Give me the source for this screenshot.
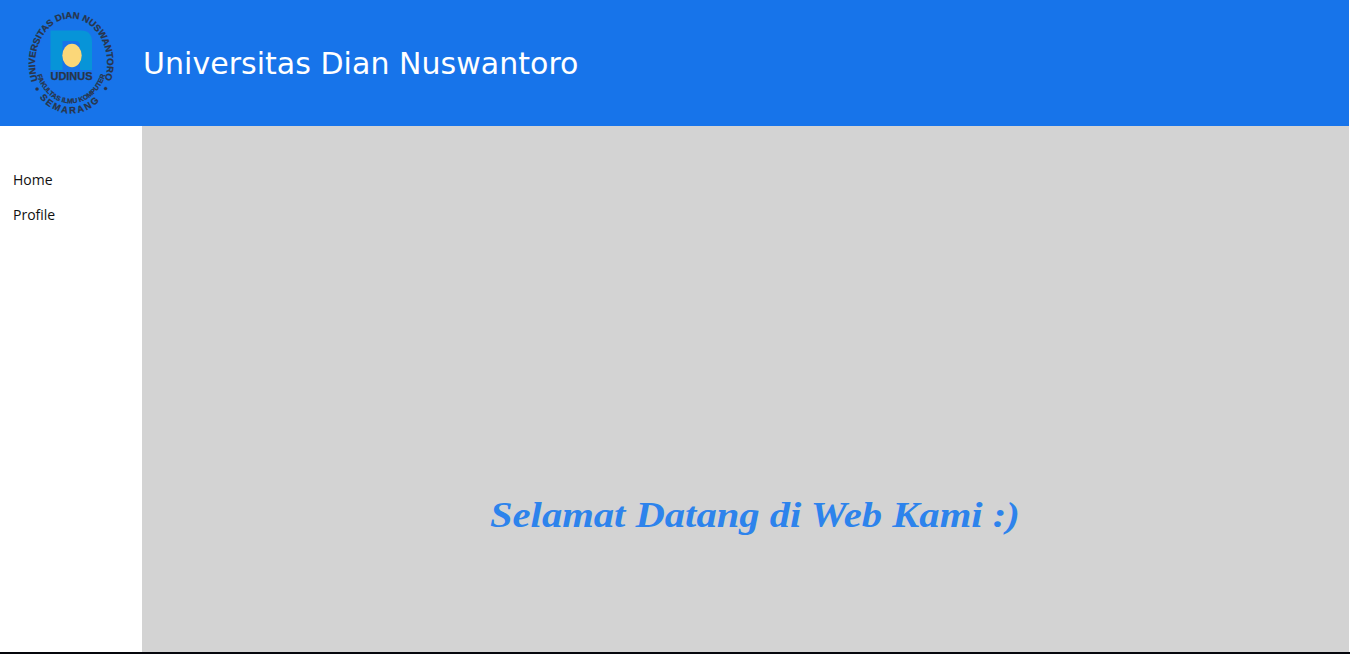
<div class="page">
  <header>
    <svg class="logo" width="142" height="126" viewBox="0 0 142 126" role="img" aria-label="UDINUS">
      <defs>
        <path id="ring-top" d="M37.8 80.5 A36 45 0 1 1 104.6 80" />
        <path id="ring-inner" d="M37 75 A36 41.5 0 0 0 105.8 73" />
        <path id="ring-bottom" d="M39.5 97.5 A43 50 0 0 0 102.5 97.5" />
      </defs>
      <path d="M50.5 70 V30.5 H81 Q92 30.5 92 42 V70 H80 V46 Q80 41 75 41 H62.5 V70 Z" fill="#0794d8" />
      <ellipse cx="72" cy="55.5" rx="9.7" ry="11.7" fill="#fbd779" />
      <g class="lettering">
        <text x="50.5" y="80" font-size="11" textLength="42" lengthAdjust="spacingAndGlyphs">UDINUS</text>
        <text font-size="9.2"><textPath href="#ring-top" textLength="161" lengthAdjust="spacingAndGlyphs">UNIVERSITAS DIAN NUSWANTORO</textPath></text>
        <text font-size="6.8"><textPath href="#ring-inner" textLength="95" lengthAdjust="spacingAndGlyphs">FAKULTAS ILMU KOMPUTER</textPath></text>
        <text font-size="9.4"><textPath href="#ring-bottom" textLength="68" lengthAdjust="spacing">SEMARANG</textPath></text>
        <circle cx="37" cy="89" r="1.6" />
        <circle cx="105.5" cy="88.5" r="1.6" />
      </g>
    </svg>
    <h1>Universitas Dian Nuswantoro</h1>
  </header>
  <div class="body">
    <nav>
      <span>Home</span>
      <span>Profile</span>
    </nav>
    <main>
      <p>Selamat Datang di Web Kami :)</p>
    </main>
  </div>
</div>

<style>
  :global(body) {
    margin: 0;
    overflow: hidden;
  }
  .page {
    box-sizing: border-box;
    height: 654px;
    display: flex;
    flex-direction: column;
    border-bottom: 2px solid #05060c;
    background: #fff;
  }
  header {
    height: 126px;
    margin-right: 1px;
    display: flex;
    background: #1774ea;
  }
  .logo {
    flex: none;
  }
  .lettering {
    font-family: "Liberation Sans", Arial, sans-serif;
    font-weight: bold;
    fill: #293448;
    stroke: #293448;
    stroke-width: 0.25px;
  }
  h1 {
    margin: 0 0 0 1px;
    font: 400 30px/128px "DejaVu Sans", Verdana, sans-serif;
    letter-spacing: 0.03px;
    color: #fff;
    white-space: nowrap;
  }
  .body {
    flex: 1;
    display: flex;
    margin-right: 1px;
  }
  nav {
    box-sizing: border-box;
    width: 142px;
    padding: 36px 0 0 13px;
    display: flex;
    flex-direction: column;
    font: 14px/35px "Open Sans", sans-serif;
    color: #111;
  }
  main {
    flex: 1;
    background: #d3d3d3;
  }
  p {
    width: max-content;
    margin: 368px 0 0 348px;
    font: italic bold 35px/44px "Liberation Serif", Georgia, serif;
    color: #2d83ec;
    white-space: nowrap;
    transform: scaleX(1.16);
    transform-origin: left;
  }
</style>
